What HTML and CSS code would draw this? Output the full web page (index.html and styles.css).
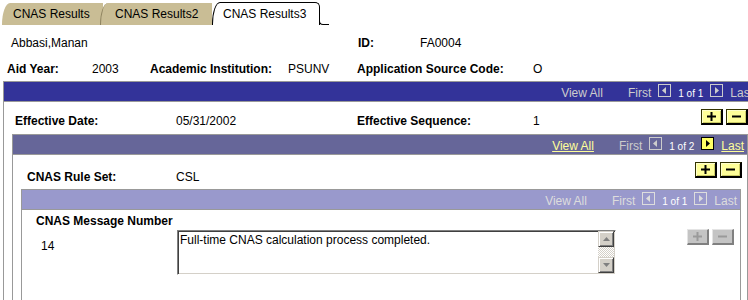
FILE: index.html
```html
<!DOCTYPE html>
<html lang="en">
<head>
  <meta charset="UTF-8" />
  <meta name="viewport" content="width=device-width, initial-scale=1.0"/>
  <title>CNAS Results3</title>
  <link rel="stylesheet" href="styles.css">
</head>
<body>
  <!-- ページタブ -->
  <div class="tabs">
    <a href="#" class="tab tab-1">CNAS Results</a>
    <a href="#" class="tab tab-2">CNAS Results2</a>
    <span class="tab tab-active">CNAS Results3</span>
    <span class="tab-end"></span>
  </div>

  <!-- キー情報 -->
  <div class="key-row row-name">
    <span class="w-name">Abbasi,Manan</span>
    <span class="lbl w-id">ID:</span>
    <span>FA0004</span>
  </div>
  <div class="key-row row-keys">
    <span class="lbl w-aid">Aid Year:</span>
    <span class="w-year">2003</span>
    <span class="lbl w-inst">Academic Institution:</span>
    <span class="w-psunv">PSUNV</span>
    <span class="lbl w-src">Application Source Code:</span>
    <span>O</span>
  </div>

  <!-- レベル1 -->
  <div class="scroll lvl1">
    <div class="bar">
      <span class="nav-off view-all">View All</span>
      <span class="nav-off first">First</span>
      <svg class="arrow" width="13" height="13" viewBox="0 0 13 13"><rect x="0.5" y="0.5" width="12" height="12" fill="none" stroke="#ccc"/><path d="M8 3v7L4 6.5z" fill="#ccc"/></svg>
      <span class="count">1 of 1</span>
      <svg class="arrow" width="13" height="13" viewBox="0 0 13 13"><rect x="0.5" y="0.5" width="12" height="12" fill="none" stroke="#ccc"/><path d="M5 3v7l4-3.5z" fill="#ccc"/></svg>
      <span class="nav-off">Last</span>
    </div>
    <div class="scroll-row row-eff">
      <span class="cell lbl w-effdt">Effective Date:</span>
      <span class="cell w-effval">05/31/2002</span>
      <span class="cell lbl w-seq">Effective Sequence:</span>
      <span class="cell w-seqval">1</span>
      <div class="btns">
        <span class="btn btn-on"><svg width="9" height="9" viewBox="0 0 9 9"><path d="M3.5 0h2v3.5H9v2H5.5V9h-2V5.5H0v-2h3.5z"/></svg></span>
        <span class="btn btn-on"><svg width="9" height="9" viewBox="0 0 9 9"><path d="M0 3.5h9v2H0z"/></svg></span>
      </div>
    </div>

    <!-- レベル2 -->
    <div class="scroll lvl2">
      <div class="bar">
        <a href="#" class="nav-link view-all">View All</a>
        <span class="nav-off first">First</span>
        <svg class="arrow" width="13" height="13" viewBox="0 0 13 13"><rect x="0.5" y="0.5" width="12" height="12" fill="none" stroke="#ccc"/><path d="M8 3v7L4 6.5z" fill="#ccc"/></svg>
        <span class="count">1 of 2</span>
        <svg class="arrow" width="13" height="13" viewBox="0 0 13 13"><rect x="0.5" y="0.5" width="12" height="12" fill="#ffff66" stroke="#000"/><path d="M5 3v7l4-3.5z" fill="#000"/></svg>
        <a href="#" class="nav-link">Last</a>
      </div>
      <div class="scroll-row row-rule">
        <span class="cell lbl w-rule">CNAS Rule Set:</span>
        <span class="cell w-ruleval">CSL</span>
        <div class="btns">
          <span class="btn btn-on"><svg width="9" height="9" viewBox="0 0 9 9"><path d="M3.5 0h2v3.5H9v2H5.5V9h-2V5.5H0v-2h3.5z"/></svg></span>
          <span class="btn btn-on"><svg width="9" height="9" viewBox="0 0 9 9"><path d="M0 3.5h9v2H0z"/></svg></span>
        </div>
      </div>

      <!-- レベル3 -->
      <div class="scroll lvl3">
        <div class="bar">
          <span class="nav-off view-all">View All</span>
          <span class="nav-off first">First</span>
          <svg class="arrow" width="13" height="13" viewBox="0 0 13 13"><rect x="0.5" y="0.5" width="12" height="12" fill="none" stroke="#ddd"/><path d="M8 3v7L4 6.5z" fill="#ddd"/></svg>
          <span class="count">1 of 1</span>
          <svg class="arrow" width="13" height="13" viewBox="0 0 13 13"><rect x="0.5" y="0.5" width="12" height="12" fill="none" stroke="#ddd"/><path d="M5 3v7l4-3.5z" fill="#ddd"/></svg>
          <span class="nav-off">Last</span>
        </div>
        <div class="msg-head lbl">CNAS Message Number</div>
        <div class="scroll-row row-msg">
          <span class="cell w-msgnum">14</span>
          <div class="memo">
            <div class="memo-text">Full-time CNAS calculation process completed.</div>
            <div class="memo-scroll">
              <span class="sb-btn"><svg width="7" height="4" viewBox="0 0 7 4"><path d="M0 4h7L3.5 0z" fill="#808080"/></svg></span>
              <span class="sb-track"></span>
              <span class="sb-btn"><svg width="7" height="4" viewBox="0 0 7 4"><path d="M0 0h7L3.5 4z" fill="#808080"/></svg></span>
            </div>
          </div>
          <div class="btns btns-msg">
            <span class="btn btn-off"><svg width="9" height="9" viewBox="0 0 9 9"><path d="M3.5 0h2v3.5H9v2H5.5V9h-2V5.5H0v-2h3.5z"/></svg></span>
            <span class="btn btn-off"><svg width="9" height="9" viewBox="0 0 9 9"><path d="M0 3.5h9v2H0z"/></svg></span>
          </div>
        </div>
      </div>
    </div>
  </div>
</body>
</html>
```

FILE: styles.css
```css
html, body {
    overflow: hidden;
}

body {
    font-family: "Liberation Sans", Arial, sans-serif;
    font-size: 12px;
    margin: 0;
    padding: 0;
    background-color: #fff;
    color: #000;
}

/* タブ */
.tabs {
    display: flex;
    align-items: flex-end;
    height: 25px;
    padding-left: 2px;
}

.tab {
    display: block;
    height: 22px;
    box-sizing: border-box;
    line-height: 22px;
    color: #000;
    text-decoration: none;
    background-color: #c9bd95;
    border-top-left-radius: 8px 22px;
    white-space: nowrap;
}

.tab-1 {
    width: 101px;
    padding-left: 11px;
}

.tab-2 {
    width: 112px;
    margin-left: -3px;
    padding-left: 14px;
    border-left: 1px solid #8f8460;
}

.tab-active {
    width: 108px;
    height: 23px;
    padding-left: 10px;
    background-color: #fff;
    border: 1px solid #000;
    border-bottom: none;
    border-top-right-radius: 5px;
}

.tab-end {
    width: 9px;
    height: 4px;
    margin-left: -1px;
    border-left: 1px solid #000;
    border-bottom: 1px solid #000;
    border-bottom-left-radius: 4px;
}

/* キー情報 */
.key-row {
    display: flex;
    height: 14px;
    line-height: 14px;
    white-space: nowrap;
}

.lbl {
    font-weight: bold;
}

.row-name {
    margin-top: 11px;
    padding-left: 11px;
}
.w-name { width: 347px; }
.w-id { width: 62px; }

.row-keys {
    margin-top: 12px;
    padding-left: 7px;
}
.w-aid { width: 85px; }
.w-year { width: 58px; }
.w-inst { width: 138px; }
.w-psunv { width: 69px; }
.w-src { width: 176px; }

/* スクロールエリア */
.scroll {
    border-top: 1px solid #999;
    border-left: 1px solid #999;
    border-right: 1px solid #999;
}

.lvl1 {
    width: 752px;
    margin: 5px 0 0 3px;
}

.lvl2 {
    margin: 6px 8px 0 8px;
}

.lvl3 {
    margin: 5px 6px 0 8px;
    padding-bottom: 40px;
}

.bar {
    display: flex;
    justify-content: flex-end;
    align-items: baseline;
    height: 20px;
    box-sizing: border-box;
    padding: 2px 3px 0 0;
    border-bottom: 1px solid #999;
    white-space: nowrap;
}

.lvl1 > .bar { background-color: #333399; }
.lvl2 > .bar { background-color: #666699; }
.lvl3 > .bar { background-color: #9999cc; }

.nav-off {
    color: #ccc;
}
.lvl3 .nav-off {
    color: #ddd;
}

.nav-link {
    color: #ffff99;
    text-decoration: underline;
}

.view-all { margin-right: 25px; }
.first { margin-right: 7px; }

.arrow {
    display: block;
    margin-right: 7px;
}

.count {
    font-size: 10px;
    color: #fff;
    margin-right: 7px;
}

/* 行 */
.scroll-row {
    display: flex;
    align-items: flex-start;
    white-space: nowrap;
}

.cell {
    line-height: 14px;
}

.row-eff {
    margin-top: 7px;
    padding-left: 11px;
}
.row-eff .cell { padding-top: 5px; }
.w-effdt { width: 161px; }
.w-effval { width: 181px; }
.w-seq { width: 176px; }
.w-seqval { width: 168px; }

.row-rule {
    margin-top: 7px;
    padding-left: 14px;
}
.row-rule .cell { padding-top: 8px; }
.w-rule { width: 149px; }
.w-ruleval { width: 519px; }

.msg-head {
    margin-top: 4px;
    padding-left: 14px;
    line-height: 14px;
}

.row-msg {
    margin-top: 1px;
    padding-left: 19px;
}
.w-msgnum {
    width: 136px;
    padding-top: 10px;
}

/* +/- ボタン */
.btns {
    display: flex;
    gap: 3px;
}

.btns-msg {
    margin-left: 71px;
}

.btn {
    width: 22px;
    height: 16px;
    box-sizing: border-box;
    display: flex;
    align-items: center;
    justify-content: center;
    border-style: solid;
    border-width: 1px 2px 2px 1px;
}

.btn-on {
    background-color: #ffff99;
    border-color: #333300 #000 #000 #333300;
    box-shadow: inset 1px 1px #ffffcc, inset -1px -1px #cccc66;
}
.btn-on svg { fill: #000; }

.btn-off {
    background-color: #c4c4c4;
    border-color: #e4e4e4 #808080 #808080 #e4e4e4;
}
.btn-off svg { fill: #9a9a9a; }

/* メモ欄 */
.memo {
    display: flex;
    width: 439px;
    height: 45px;
    box-sizing: border-box;
    margin-top: 1px;
    background-color: #fff;
    border: 1px solid;
    border-color: #808080 #fff #fff #808080;
    box-shadow: inset 1px 1px #404040, inset -1px -1px #d4d0c8;
}

.memo-text {
    flex: 1;
    padding: 2px 0 0 2px;
    line-height: 14px;
}

.memo-scroll {
    width: 16px;
    display: flex;
    flex-direction: column;
    margin: 0 1px 1px 0;
}

.sb-btn {
    height: 16px;
    box-sizing: border-box;
    display: flex;
    align-items: center;
    justify-content: center;
    background-color: #d4d0c8;
    border: 1px solid;
    border-color: #d4d0c8 #404040 #404040 #d4d0c8;
    box-shadow: inset 1px 1px #fff, inset -1px -1px #808080;
}

.sb-track {
    flex: 1;
    background: repeating-conic-gradient(#d4d0c8 0 25%, #fff 0 50%) 0 0 / 2px 2px;
}
```
